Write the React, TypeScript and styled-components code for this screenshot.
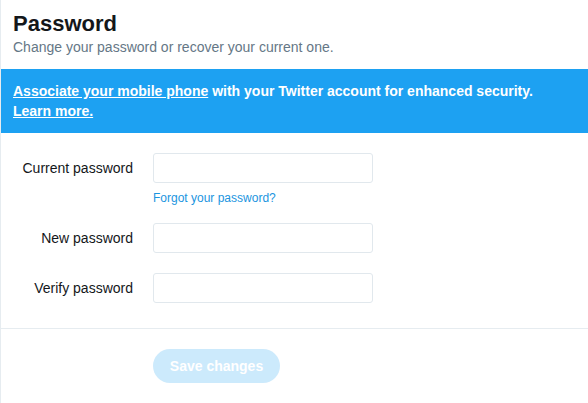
import React from "react";
import styled, { createGlobalStyle } from "styled-components";

const Global = createGlobalStyle`
  html, body { margin: 0; padding: 0; background: #fff; }
  body { font-family: "Liberation Sans", Arial, Helvetica, sans-serif; color: #14171a; }
  * { box-sizing: border-box; }
`;

const Page = styled.div`
  width: 588px;
  height: 403px;
  border-left: 1px solid #e6ecf0;
  background: #fff;
  overflow: hidden;
`;

const Header = styled.header`
  padding: 12px 12px 13px 12px;
`;

const Title = styled.h1`
  margin: 0;
  font-size: 22px;
  line-height: 24px;
  font-weight: 700;
  color: #14171a;
`;

const Subtitle = styled.p`
  margin: 2px 0 0;
  font-size: 14px;
  line-height: 18px;
  color: #657786;
`;

const Banner = styled.div`
  background: #1da1f2;
  color: #fff;
  padding: 12px 12px;
  font-size: 14px;
  line-height: 20px;
  font-weight: 700;
`;

const BannerLink = styled.a`
  color: #fff;
  text-decoration: underline;
  white-space: nowrap;
  cursor: pointer;
`;

const Form = styled.div`
  padding: 20px 0 25px;
  display: flex;
  flex-direction: column;
  gap: 20px;
  border-bottom: 1px solid #e6ecf0;
`;

const Row = styled.div`
  display: grid;
  grid-template-columns: 132px 220px;
  column-gap: 20px;
  align-items: start;
`;

const Label = styled.label`
  text-align: right;
  font-size: 14px;
  line-height: 30px;
  color: #14171a;
`;

const Field = styled.div`
  display: flex;
  flex-direction: column;
`;

const Input = styled.input`
  width: 220px;
  height: 30px;
  border: 1px solid #e1e8ed;
  border-radius: 3px;
  padding: 4px 8px;
  font-size: 14px;
  outline: none;
`;

const Helper = styled.a`
  margin-top: 6px;
  margin-bottom: -5px;
  font-size: 12px;
  line-height: 19px;
  color: #1b95e0;
  text-decoration: none;
  cursor: pointer;
`;

const Footer = styled.div`
  padding: 20px 0 0 152px;
`;

const SaveButton = styled.button`
  width: 127px;
  height: 34px;
  border: none;
  border-radius: 17px;
  background: #1da1f2;
  opacity: 0.22;
  color: #fff;
  font-family: "Liberation Sans", Arial, sans-serif;
  font-size: 14px;
  font-weight: 700;
  cursor: default;
`;

const fields = [
  { id: "current", label: "Current password", helper: "Forgot your password?" },
  { id: "new", label: "New password" },
  { id: "verify", label: "Verify password" },
];

export default function App() {
  return (
    <Page>
      <Global />
      <Header>
        <Title>Password</Title>
        <Subtitle>Change your password or recover your current one.</Subtitle>
      </Header>
      <Banner>
        <BannerLink>Associate your mobile phone</BannerLink> with your Twitter account for enhanced security.{" "}
        <BannerLink>Learn more.</BannerLink>
      </Banner>
      <Form>
        {fields.map((f) => (
          <Row key={f.id}>
            <Label htmlFor={f.id}>{f.label}</Label>
            <Field>
              <Input id={f.id} type="password" />
              {f.helper && <Helper>{f.helper}</Helper>}
            </Field>
          </Row>
        ))}
      </Form>
      <Footer>
        <SaveButton disabled>Save changes</SaveButton>
      </Footer>
    </Page>
  );
}
